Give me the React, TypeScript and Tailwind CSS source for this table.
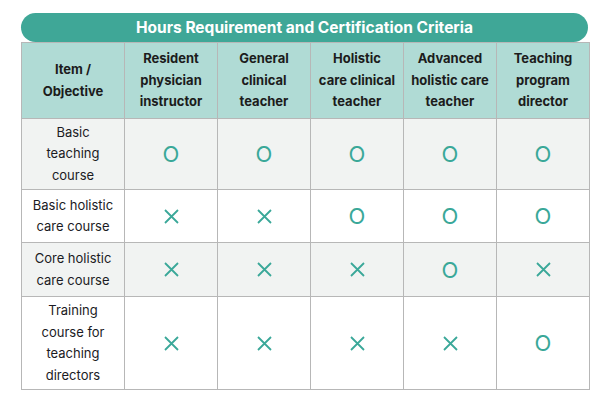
import React from "react";

type Mark = "O" | "X";

const columns = [
    ["Resident", "physician", "instructor"],
    ["General", "clinical", "teacher"],
    ["Holistic", "care clinical", "teacher"],
    ["Advanced", "holistic care", "teacher"],
    ["Teaching", "program", "director"],
];

const rows: { label: string[]; marks: Mark[]; height: string; gray: boolean }[] = [
    { label: ["Basic", "teaching", "course"], marks: ["O", "O", "O", "O", "O"], height: "h-[70px]", gray: true },
    { label: ["Basic holistic", "care course"], marks: ["X", "X", "O", "O", "O"], height: "h-[52px]", gray: false },
    { label: ["Core holistic", "care course"], marks: ["X", "X", "X", "O", "X"], height: "h-[53px]", gray: true },
    { label: ["Training", "course for", "teaching", "directors"], marks: ["X", "X", "X", "X", "O"], height: "h-[92px]", gray: false },
];

const MarkCell = ({ mark }: { mark: Mark }) =>
    mark === "O" ? (
        <span className="text-[22px] leading-none text-[#3aa899]">O</span>
    ) : (
        <svg width="15" height="15" viewBox="0 0 15 15" className="text-[#3aa899]">
            <path d="M1 1 L14 14 M14 1 L1 14" stroke="currentColor" strokeWidth="1.8" fill="none" />
        </svg>
    );

export default function App() {
    return (
        <div className="min-h-screen bg-white pt-[13px] pl-[21px] font-['Inter',sans-serif]">
            <div className="w-[569px]">
                {/* Title pill */}
                <div className="flex h-[29px] w-[567px] items-center justify-center rounded-full bg-[#3fa797] text-[15.5px] font-bold text-white">
                    Hours Requirement and Certification Criteria
                </div>

                {/* Table */}
                <div className="grid grid-cols-[102px_repeat(5,92px)] gap-px bg-[#b7b7b7] p-px text-[13px] leading-[21.5px]">
                    {/* Header */}
                    <div className="flex h-[75px] items-center justify-center bg-[#b0dbd5] text-center font-bold text-[#1c1c1c]">
                        <div>
                            <div>Item /</div>
                            <div>Objective</div>
                        </div>
                    </div>
                    {columns.map((col, i) => (
                        <div key={i} className="flex h-[75px] items-center justify-center bg-[#b0dbd5] text-center font-bold text-[#1c1c1c]">
                            <div>
                                {col.map((l) => (
                                    <div key={l}>{l}</div>
                                ))}
                            </div>
                        </div>
                    ))}

                    {/* Body */}
                    {rows.map((row, r) => (
                        <React.Fragment key={r}>
                            <div className={`flex ${row.height} items-center justify-center text-center text-[#1b1b24] ${row.gray ? "bg-[#f1f3f2]" : "bg-white"}`}>
                                <div>
                                    {row.label.map((l) => (
                                        <div key={l}>{l}</div>
                                    ))}
                                </div>
                            </div>
                            {row.marks.map((m, c) => (
                                <div key={c} className={`flex ${row.height} items-center justify-center ${row.gray ? "bg-[#f1f3f2]" : "bg-white"}`}>
                                    <MarkCell mark={m} />
                                </div>
                            ))}
                        </React.Fragment>
                    ))}
                </div>
            </div>
        </div>
    );
}
